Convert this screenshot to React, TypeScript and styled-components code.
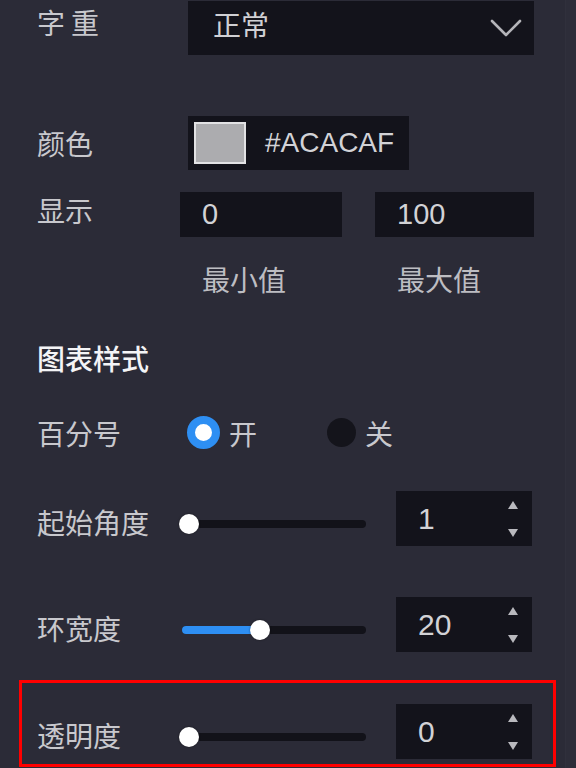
import styled, { createGlobalStyle } from "styled-components";

const GlobalStyle = createGlobalStyle`
	html, body {
		margin: 0;
		padding: 0;
		background: #2b2b37;
	}
	* {
		box-sizing: border-box;
	}
`;

const CJK = `"Noto Sans CJK SC", "Noto Sans", sans-serif`;
const LATIN = `"Liberation Sans", "Noto Sans CJK SC", sans-serif`;

interface SliderSetting {
	label: string;
	value: number;
	min: number;
	max: number;
}

const sliders: SliderSetting[] = [
	{ label: "起始角度", value: 1, min: 0, max: 360 },
	{ label: "环宽度", value: 20, min: 0, max: 48 },
];

const opacity: SliderSetting = { label: "透明度", value: 0, min: 0, max: 100 };

const TRACK = 184;
const THUMB = 20;

function ChevronDown() {
	return (
		<svg width="32" height="19" viewBox="0 0 32 19" fill="none">
			<polyline
				points="2,2 16,16 30,2"
				stroke="#b4b4b9"
				strokeWidth="2.6"
				strokeLinecap="round"
				strokeLinejoin="round"
			/>
		</svg>
	);
}

function Slider({ value, min, max }: { value: number; min: number; max: number }) {
	const frac = (value - min) / (max - min);
	const center = THUMB / 2 - 3 + frac * (TRACK - THUMB + 6);

	return (
		<Track>
			<Fill style={{ width: frac > 0 ? center : 0 }} />
			<Thumb style={{ left: center }} />
		</Track>
	);
}

function NumberInput({ value }: { value: number }) {
	return (
		<NumberBox>
			<span>{value}</span>
			<Spinner>
				<Arrow $up />
				<Arrow />
			</Spinner>
		</NumberBox>
	);
}

function SliderRow({ setting }: { setting: SliderSetting }) {
	return (
		<Row $height={55}>
			<Label $shift={6}>{setting.label}</Label>
			<Slider value={setting.value} min={setting.min} max={setting.max} />
			<NumberInput value={setting.value} />
		</Row>
	);
}

export default function App() {
	return (
		<Page>
			<GlobalStyle />
			<Panel>
				<Row $height={54}>
					<Label $spacing={6} $shift={-13}>
						字重
					</Label>
					<Select>
						<SelectText>正常</SelectText>
						<ChevronDown />
					</Select>
				</Row>

				<Row $height={54} $gap={61}>
					<Label>颜色</Label>
					<ColorField>
						<Swatch />
						<HexText>#ACACAF</HexText>
					</ColorField>
				</Row>

				<Row $height={45} $gap={22}>
					<Label $shift={-10}>显示</Label>
					<RangePair>
						<TextBox>0</TextBox>
						<TextBox>100</TextBox>
					</RangePair>
				</Row>

				<SubLabels>
					<SubLabel>最小值</SubLabel>
					<SubLabel>最大值</SubLabel>
				</SubLabels>

				<SectionTitle>图表样式</SectionTitle>

				<Row $height={33} $gap={44}>
					<Label>百分号</Label>
					<RadioGroup>
						<RadioOption>
							<RadioDot $checked />
							<RadioText>开</RadioText>
						</RadioOption>
						<RadioOption>
							<RadioDot />
							<RadioText>关</RadioText>
						</RadioOption>
					</RadioGroup>
				</Row>

				<SliderList>
					{sliders.map((s) => (
						<SliderRow key={s.label} setting={s} />
					))}
				</SliderList>

				<Highlight>
					<SliderRow setting={opacity} />
				</Highlight>
			</Panel>
			<ScrollStrip />
		</Page>
	);
}

const Page = styled.div`
	display: flex;
	width: 576px;
	height: 768px;
	overflow: hidden;
	background: #2b2b37;
`;

const Panel = styled.div`
	display: flex;
	flex-direction: column;
	width: 565px;
	padding: 1px 31px 0 37px;
	flex: none;
`;

const ScrollStrip = styled.div`
	flex: 1;
	background: #2d2d39;
	border-left: 1px solid #30303c;
`;

const Row = styled.div<{ $height: number; $gap?: number }>`
	display: flex;
	align-items: center;
	height: ${({ $height }) => $height}px;
	margin-top: ${({ $gap }) => $gap ?? 0}px;
	flex: none;
`;

const Label = styled.div<{ $spacing?: number; $shift?: number }>`
	width: 143px;
	flex: none;
	font-family: ${CJK};
	font-size: 28px;
	line-height: 1;
	color: #c8c8cd;
	letter-spacing: ${({ $spacing }) => $spacing ?? 0}px;
	${({ $shift }) =>
		$shift && $shift > 0 ? `margin-top: ${$shift}px;` : $shift ? `margin-bottom: ${-$shift}px;` : ""}
`;

const Select = styled.div`
	margin-left: 8px;
	flex: 1;
	height: 100%;
	display: flex;
	align-items: center;
	justify-content: space-between;
	padding: 0 12px 0 25px;
	background: #13131b;
`;

const SelectText = styled.span`
	font-family: ${CJK};
	font-size: 28px;
	line-height: 1;
	color: #d0d0d4;
	margin-bottom: 8px;
`;

const ColorField = styled.div`
	margin-left: 8px;
	width: 221px;
	height: 100%;
	display: flex;
	align-items: center;
	gap: 19px;
	padding-left: 6px;
	background: #13131b;
`;

const Swatch = styled.div`
	width: 52px;
	height: 42px;
	border: 2px solid #e2e2e4;
	background: #acacaf;
	flex: none;
`;

const HexText = styled.span`
	font-family: ${LATIN};
	font-size: 28px;
	color: #d2d2d6;
`;

const RangePair = styled.div`
	display: grid;
	grid-template-columns: 162px 159px;
	column-gap: 33px;
	height: 100%;
`;

const TextBox = styled.div`
	display: flex;
	align-items: center;
	padding-left: 22px;
	background: #13131b;
	font-family: ${LATIN};
	font-size: 29px;
	color: #d2d2d6;
`;

const SubLabels = styled.div`
	display: grid;
	grid-template-columns: 162px 159px;
	column-gap: 33px;
	margin-top: 28px;
	padding-left: 143px;
`;

const SubLabel = styled.div`
	padding-left: 22px;
	font-family: ${CJK};
	font-size: 28px;
	line-height: 1;
	color: #bdbdc2;
`;

const SectionTitle = styled.div`
	margin-top: 51px;
	font-family: ${CJK};
	font-size: 28px;
	font-weight: 500;
	line-height: 1;
	color: #f4f4f6;
`;

const RadioGroup = styled.div`
	display: flex;
	align-items: center;
	margin-left: 7px;
	gap: 70px;
`;

const RadioOption = styled.div`
	display: flex;
	align-items: center;
	gap: 9px;
`;

const RadioDot = styled.div<{ $checked?: boolean }>`
	width: ${({ $checked }) => ($checked ? 33 : 29)}px;
	height: ${({ $checked }) => ($checked ? 33 : 29)}px;
	border-radius: 50%;
	flex: none;
	background: ${({ $checked }) => ($checked ? "#ffffff" : "#14141b")};
	border: ${({ $checked }) => ($checked ? "8px solid #2e8ff3" : "none")};
`;

const RadioText = styled.span`
	font-family: ${CJK};
	font-size: 28px;
	line-height: 1;
	color: #c8c8cd;
`;

const SliderList = styled.div`
	display: flex;
	flex-direction: column;
	gap: 51px;
	margin-top: 42px;
`;

const Track = styled.div`
	position: relative;
	margin: 10px 0 0 2px;
	width: ${TRACK}px;
	height: 8px;
	border-radius: 4px;
	background: #121219;
	flex: none;
`;

const Fill = styled.div`
	height: 100%;
	border-radius: 4px;
	background: #2e8ff3;
`;

const Thumb = styled.div`
	position: absolute;
	top: 50%;
	width: ${THUMB}px;
	height: ${THUMB}px;
	border-radius: 50%;
	background: #ffffff;
	box-shadow: 0 0 2px rgba(0, 0, 0, 0.5);
	transform: translate(-50%, -50%);
`;

const NumberBox = styled.div`
	margin-left: auto;
	margin-right: 2px;
	width: 136px;
	height: 100%;
	display: flex;
	align-items: center;
	justify-content: space-between;
	padding: 0 14px 0 22px;
	background: #13131b;
	font-family: ${LATIN};
	font-size: 30px;
	color: #d2d2d6;
`;

const Spinner = styled.div`
	display: flex;
	flex-direction: column;
	gap: 20px;
`;

const Arrow = styled.div<{ $up?: boolean }>`
	width: 0;
	height: 0;
	border-left: 5.5px solid transparent;
	border-right: 5.5px solid transparent;
	${({ $up }) => ($up ? "border-bottom: 8px solid #b9b9be;" : "border-top: 8px solid #b9b9be;")}
`;

const Highlight = styled.div`
	margin: 28px -22px 0 -18px;
	padding: 21px 19px 5px 15px;
	border: 3px solid #ff0000;
`;
